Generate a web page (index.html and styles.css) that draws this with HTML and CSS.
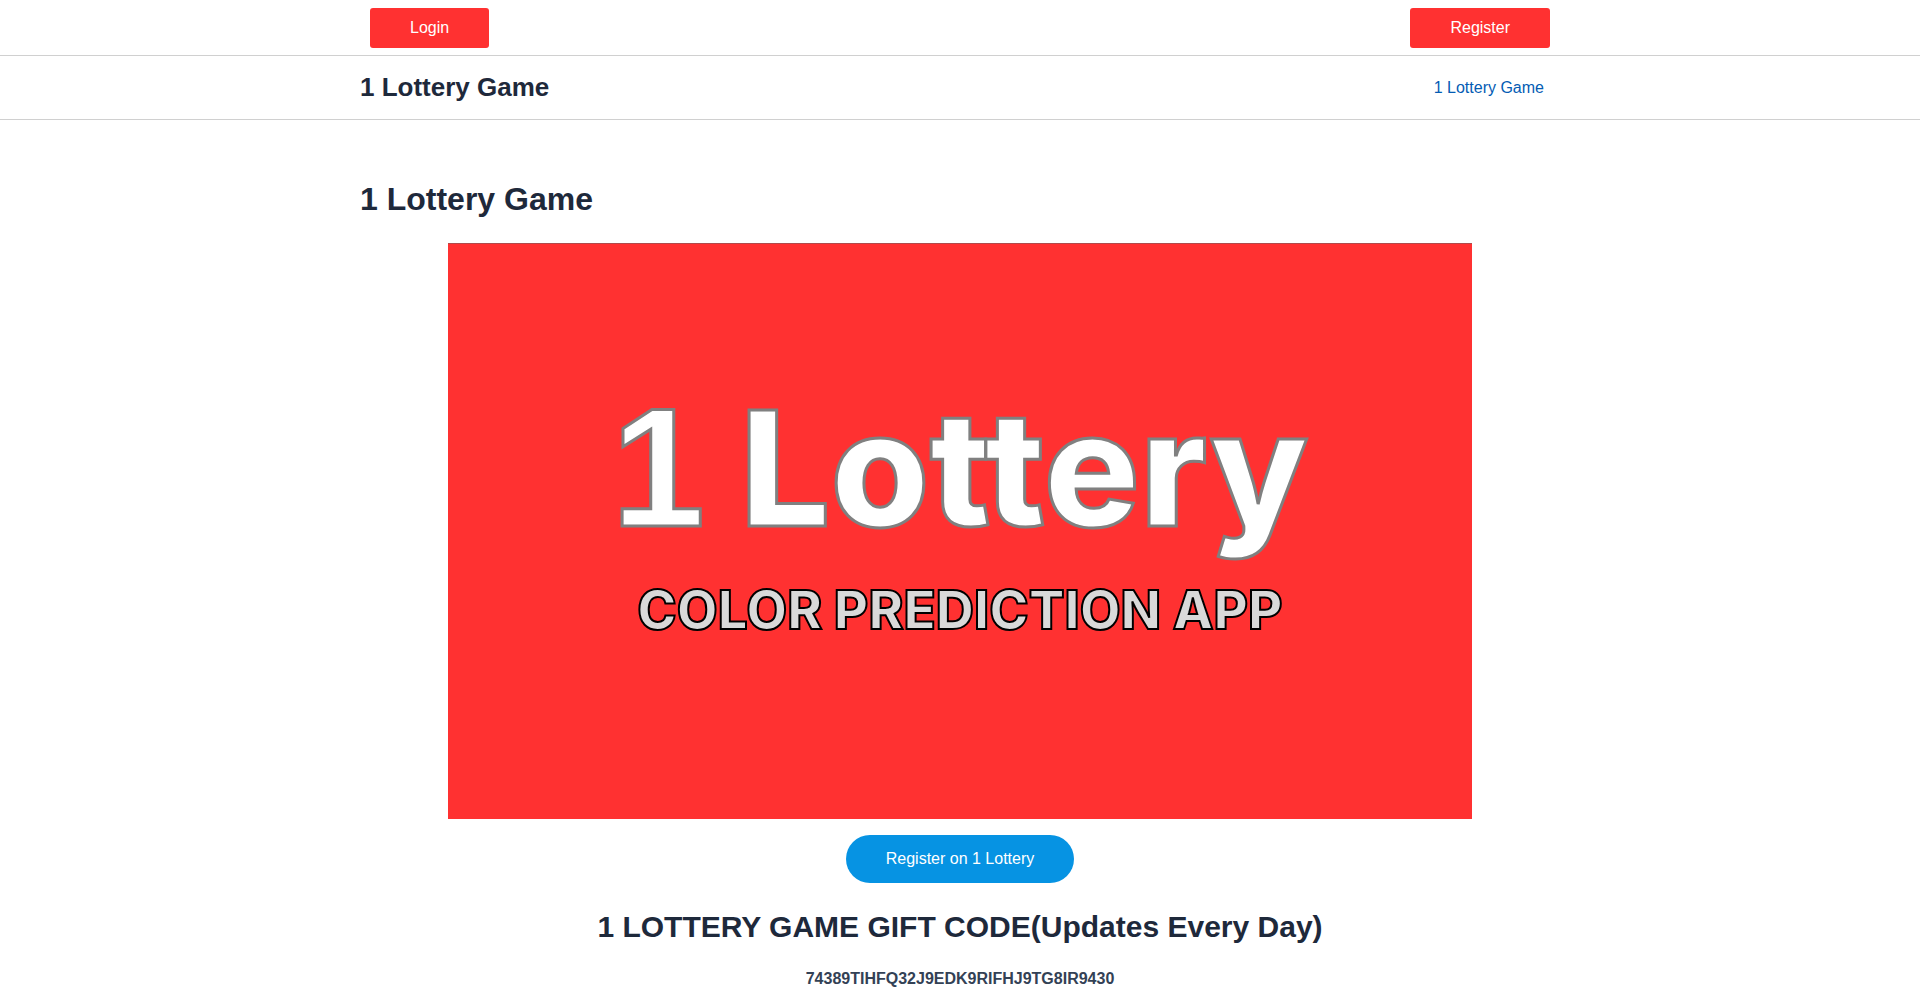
FILE: index.html
```html
<!DOCTYPE html>
<html lang="en">
<head>
    <meta charset="UTF-8">
    <meta name="viewport" content="width=device-width, initial-scale=1.0">
    <title>1 Lottery Game</title>
    <link rel="stylesheet" href="styles.css">
</head>
<body>
    <header>
        <div class="top-bar">
            <div class="container top-inner">
                <a class="btn" href="#login">Login</a>
                <a class="btn" href="#register">Register</a>
            </div>
        </div>
        <div class="main-bar">
            <div class="container main-inner">
                <a class="site-title" href="#">1 Lottery Game</a>
                <nav>
                    <a class="nav-link" href="#">1 Lottery Game</a>
                </nav>
            </div>
        </div>
    </header>

    <main class="container content">
        <h1>1 Lottery Game</h1>

        <svg class="banner" viewBox="0 0 1024 576" role="img" aria-label="1 Lottery color prediction app">
            <rect class="banner-bg" width="1024" height="576"/>
            <rect class="banner-edge" width="1024" height="1"/>
            <text class="banner-title" x="512" y="283"><tspan class="banner-number">1</tspan> Lottery</text>
            <text class="banner-subtitle" x="512" y="386">COLOR PREDICTION APP</text>
        </svg>

        <a class="btn btn-pill" href="#register">Register on 1 Lottery</a>

        <h2>1 LOTTERY GAME GIFT CODE(Updates Every Day)</h2>
        <p class="gift-code">74389TIHFQ32J9EDK9RIFHJ9TG8IR9430</p>
    </main>
</body>
</html>
```
FILE: styles.css
```css
* {
    box-sizing: border-box;
}

body {
    margin: 0;
    font-family: "Liberation Sans", Arial, sans-serif;
    font-size: 16px;
    line-height: 26px;
    color: #334155;
    background-color: #fff;
}

a {
    text-decoration: none;
}

h1,
h2 {
    margin: 0;
    color: #1e293b;
}

.container {
    max-width: 1240px;
    margin: 0 auto;
    padding: 0 20px;
}

/* Header */
.top-bar,
.main-bar {
    border-bottom: 1px solid #d0d0d0;
}

.top-inner {
    display: flex;
    justify-content: space-between;
    padding: 8px 30px 7px;
}

.main-inner {
    display: flex;
    justify-content: space-between;
    align-items: center;
    min-height: 63px;
}

.site-title {
    padding-bottom: 2px;
    font-size: 26px;
    line-height: 28px;
    font-weight: bold;
    color: #1e293b;
}

.nav-link {
    padding: 0 16px;
    color: #045cb4;
}

.btn {
    display: inline-block;
    padding: 7px 40px;
    border-radius: 3px;
    background-color: #ff3131;
    color: #fff;
}

/* Page content */
.content {
    display: flex;
    flex-direction: column;
    align-items: center;
    padding-top: 59px;
}

h1 {
    align-self: flex-start;
    margin-bottom: 24px;
    font-size: 32px;
    line-height: 40px;
}

.banner {
    display: block;
    width: 100%;
    max-width: 1024px;
    margin-bottom: 16px;
}

.banner-bg {
    fill: #ff3131;
}

.banner-edge {
    fill: #b04a4a;
}

.banner-title {
    font-family: Inter, sans-serif;
    font-size: 160px;
    font-weight: 800;
    text-anchor: middle;
    fill: #fff;
    stroke: #808080;
    stroke-width: 3px;
}

.banner-number {
    font-family: "Liberation Sans", Arial, sans-serif;
    font-size: 168px;
}

.banner-subtitle {
    font-family: Inter, sans-serif;
    font-size: 53px;
    font-weight: 800;
    text-anchor: middle;
    fill: #d9d9d9;
    stroke: #000;
    stroke-width: 2px;
}

.btn-pill {
    padding: 11px 40px;
    border-radius: 24px;
    background-color: #0693e3;
}

h2 {
    margin: 24px 0 19px;
    font-size: 30px;
    line-height: 40px;
    text-align: center;
}

.gift-code {
    margin: 0;
    font-weight: bold;
}
```
